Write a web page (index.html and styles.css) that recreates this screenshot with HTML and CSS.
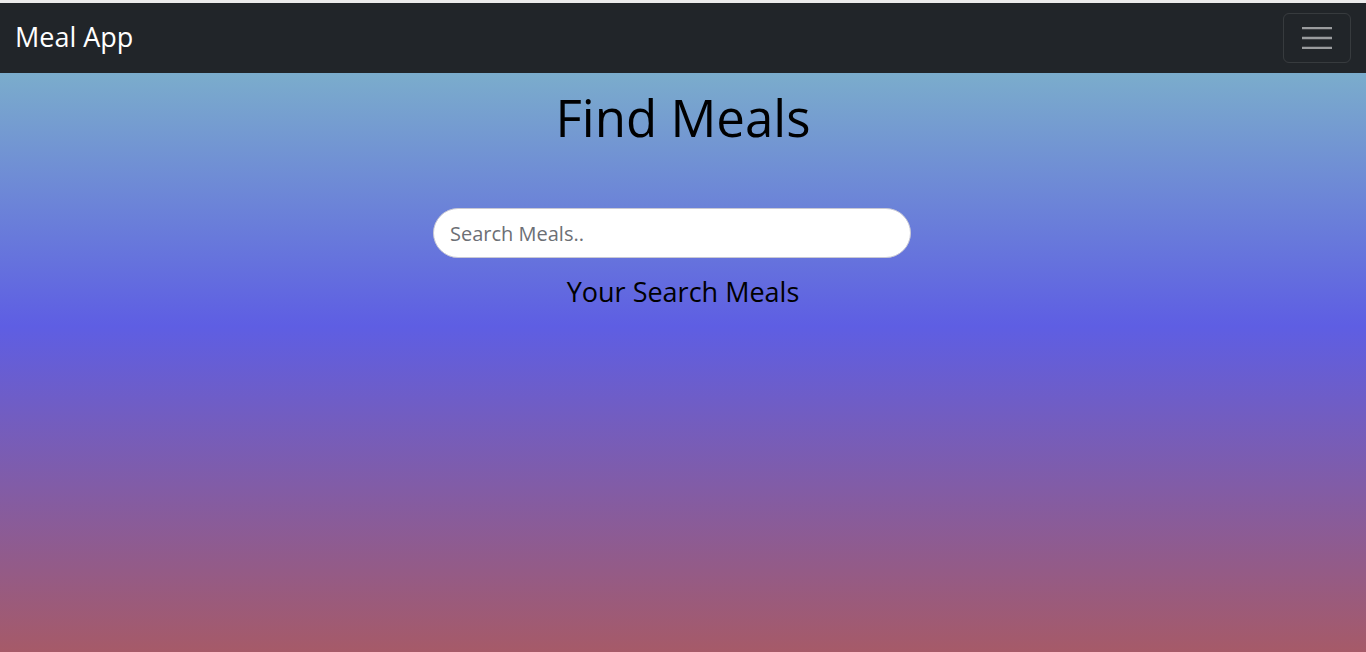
FILE: index.html
```html
<!DOCTYPE html>
<html lang="en">
<head>
<meta charset="utf-8">
<title>Meal App</title>
<link rel="stylesheet" href="styles.css">
</head>
<body>
<nav class="navbar">
  <a class="brand" href="#">Meal App</a>
  <button class="toggler" type="button" aria-label="Toggle navigation">
    <svg width="30" height="22" viewBox="0 0 30 22"><path d="M0 1h30M0 11h30M0 21h30" stroke="rgba(255,255,255,0.55)" stroke-width="2.5"/></svg>
  </button>
</nav>
<main class="content">
  <h1 class="title">Find Meals</h1>
  <div class="search-wrap">
    <input class="search" type="text" placeholder="Search Meals..">
  </div>
  <h2 class="subtitle">Your Search Meals</h2>
</main>
</body>
</html>
```
FILE: styles.css
```css
html, body {
  margin: 0;
  padding: 0;
}
body {
  min-height: 652px;
  box-sizing: border-box;
  border-top: 3px solid #ebebeb;
  font-family: "Open Sans", "Noto Sans", sans-serif;
  background: linear-gradient(180deg, #83c3c5 0%, #5e5ee3 50%, #a65a68 100%);
}
.navbar {
  height: 70px;
  background: #212529;
  display: flex;
  align-items: center;
  justify-content: space-between;
  padding: 0 15px;
}
.brand {
  color: #fff;
  text-decoration: none;
  font-size: 27px;
  margin-bottom: 4px;
}
.toggler {
  width: 68px;
  height: 50px;
  background: transparent;
  border: 1px solid rgba(255,255,255,0.1);
  border-radius: 6px;
  display: flex;
  align-items: center;
  justify-content: center;
  padding: 0;
}
.content {
  display: flex;
  flex-direction: column;
  align-items: center;
}
.title {
  margin: 9px 0 0;
  font-size: 51px;
  font-weight: 400;
  line-height: normal;
  color: #000;
}
.search-wrap {
  width: 500px;
  margin-top: 56px;
}
.search {
  display: block;
  width: 478px;
  height: 50px;
  box-sizing: border-box;
  border: 1px solid #c9c9d4;
  border-radius: 25px;
  padding: 0 16px;
  font-family: inherit;
  font-size: 20px;
  background: #fff;
  outline: none;
}
.search::placeholder {
  color: #6c6f75;
}
.subtitle {
  margin: 15px 0 0;
  font-size: 27px;
  font-weight: 400;
  line-height: normal;
  color: #000;
}
```
